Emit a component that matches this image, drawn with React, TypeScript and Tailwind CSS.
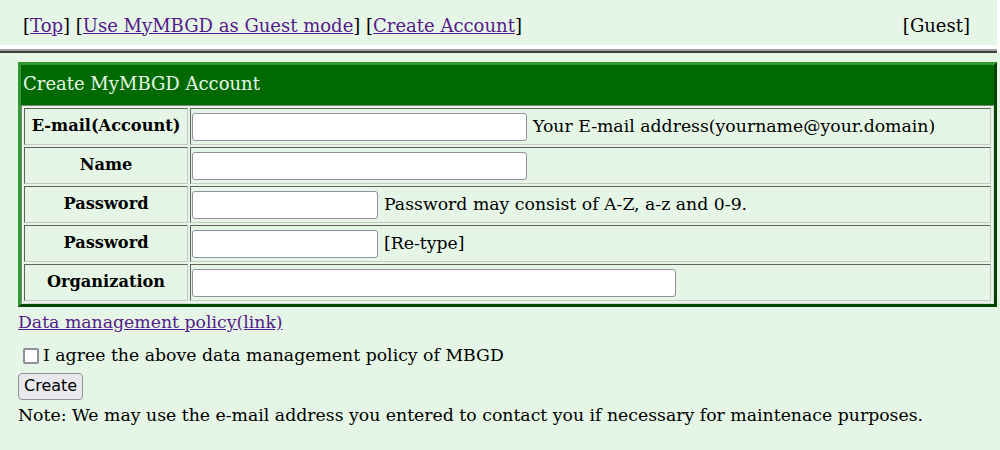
import { useState } from "react";

const rows = [
  { id: "email", label: "E-mail(Account)", width: "w-[335px]", note: "Your E-mail address(yourname@your.domain)", type: "text" },
  { id: "name", label: "Name", width: "w-[335px]", note: "", type: "text" },
  { id: "pass", label: "Password", width: "w-[186px]", note: "Password may consist of A-Z, a-z and 0-9.", type: "password" },
  { id: "pass2", label: "Password", width: "w-[186px]", note: "[Re-type]", type: "password" },
  { id: "org", label: "Organization", width: "w-[484px]", note: "", type: "text" },
];

export default function App() {
  const [agree, setAgree] = useState(false);

  return (
    <div className="min-h-[450px] bg-[#e6f6e6] text-[17.3px] text-black font-['DejaVu_Serif','Liberation_Serif',serif]">
      {/* top nav */}
      <div className="bg-white pr-[3px]">
        <div className="flex h-[45px] items-center justify-between bg-[#e6f6e6] pl-[23px] pr-[27px] pt-[5px] text-[18px]">
          <div>
            [<a href="#" className="text-[#551a8b] underline">Top</a>]{" "}
            [<a href="#" className="text-[#551a8b] underline">Use MyMBGD as Guest mode</a>]{" "}
            [<a href="#" className="text-[#551a8b] underline">Create Account</a>]
          </div>
          <div>[Guest]</div>
        </div>
        <div className="h-[4px]" />
        <div className="border-t-[2px] border-b-[2px] border-t-[#a0a0a0] border-b-[#404040] h-[3px] bg-white" />
      </div>

      <div className="pl-[18px] pr-[3px] pt-[9px]">
        <div className="border-[3px] border-t-[#2f9a2f] border-l-[#2f9a2f] border-r-[#004600] border-b-[#004600] bg-[#006a00]">
          <div className="h-[40px] pl-[2px] pt-[5px] text-[18px] text-[#e8f8e8]">Create MyMBGD Account</div>
          <table className="w-full border-separate border-spacing-[2px] border border-t-[#808080] border-l-[#808080] border-r-[#d8d8d8] border-b-[#d8d8d8] bg-[#e6f6e6]">
            <tbody>
              {rows.map((r) => (
                <tr key={r.id} className="h-[37px]">
                  <td className="w-[164px] border border-t-[#606060] border-l-[#606060] border-r-[#c8c8c8] border-b-[#c8c8c8] px-[3px] text-center text-[16.2px] font-bold whitespace-nowrap">
                    {r.label}
                  </td>
                  <td className="border border-t-[#606060] border-l-[#606060] border-r-[#c8c8c8] border-b-[#c8c8c8] px-[1px]">
                    <div className="flex items-center gap-[6px]">
                      <input
                        type={r.type}
                        className={`${r.width} h-[28px] rounded-[3px] border border-[#8f8f9d] bg-white`}
                      />
                      {r.note && <span>{r.note}</span>}
                    </div>
                  </td>
                </tr>
              ))}
            </tbody>
          </table>
        </div>

        <div className="mt-[3px]">
          <a href="#" className="text-[#551a8b] underline">Data management policy(link)</a>
        </div>
        <label className="mt-[7px] flex items-center gap-[4px] pl-[5px]">
          <input
            type="checkbox"
            checked={agree}
            onChange={(e) => setAgree(e.target.checked)}
            className="h-[16px] w-[16px] appearance-none rounded-[2px] border-2 border-[#8f8f9d] bg-white checked:bg-[#0060df]"
          />
          I agree the above data management policy of MBGD
        </label>
        <button className="mt-[4px] h-[27px] rounded-[4px] border border-[#8f8f9d] bg-[#e9e9ed] px-[5px] text-[16px] font-['DejaVu_Sans',sans-serif]">
          Create
        </button>
        <div className="mt-[3px]">
          Note: We may use the e-mail address you entered to contact you if necessary for maintenace purposes.
        </div>
      </div>
    </div>
  );
}
